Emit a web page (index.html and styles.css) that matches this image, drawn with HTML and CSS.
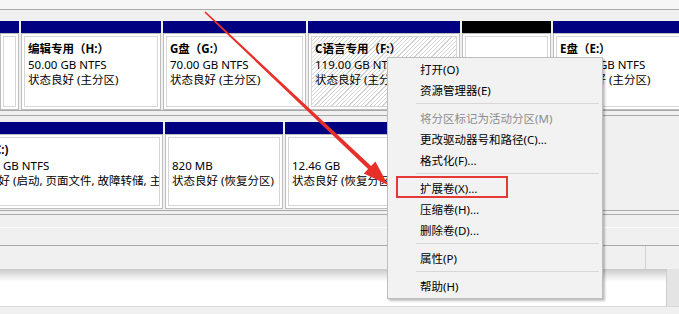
FILE: index.html
```html
<!DOCTYPE html>
<html lang="zh-CN">
<head>
    <meta charset="UTF-8">
    <meta name="viewport" content="width=device-width, initial-scale=1.0">
    <title>磁盘管理</title>
    <link rel="stylesheet" href="styles.css">
</head>
<body>
    <div class="console">
        <div class="strip"></div>

        <!-- 磁盘 0 -->
        <div class="disk disk-a">
            <div class="part p-edge">
                <div class="part-head"></div>
                <div class="part-body"><div class="part-inner"></div></div>
            </div>
            <div class="part p-h">
                <div class="part-head"></div>
                <div class="part-body">
                    <div class="part-inner">
                        <div class="name">编辑专用（H:）</div>
                        <div>50.00 GB NTFS</div>
                        <div>状态良好 (主分区)</div>
                    </div>
                </div>
            </div>
            <div class="part p-g">
                <div class="part-head"></div>
                <div class="part-body">
                    <div class="part-inner">
                        <div class="name">G盘（G:）</div>
                        <div>70.00 GB NTFS</div>
                        <div>状态良好 (主分区)</div>
                    </div>
                </div>
            </div>
            <div class="part p-f">
                <div class="part-head"></div>
                <div class="part-body">
                    <div class="part-inner hatch">
                        <div class="name">C语言专用（F:）</div>
                        <div>119.00 GB NTFS</div>
                        <div>状态良好 (主分区)</div>
                    </div>
                </div>
            </div>
            <div class="part p-free">
                <div class="part-head black"></div>
                <div class="part-body"><div class="part-inner"></div></div>
            </div>
            <div class="part p-e">
                <div class="part-head"></div>
                <div class="part-body">
                    <div class="part-inner">
                        <div class="name">E盘（E:）</div>
                        <div>100.00 GB NTFS</div>
                        <div>状态良好 (主分区)</div>
                    </div>
                </div>
            </div>
        </div>

        <!-- 磁盘 1 -->
        <div class="disk disk-b">
            <div class="part p-c">
                <div class="part-head"></div>
                <div class="part-body">
                    <div class="part-inner">
                        <div class="name">系统 (C:)</div>
                        <div>100.00 GB NTFS</div>
                        <div>状态良好 (启动, 页面文件, 故障转储, 主分区)</div>
                    </div>
                </div>
            </div>
            <div class="part p-rec1">
                <div class="part-head"></div>
                <div class="part-body">
                    <div class="part-inner">
                        <div class="name">&nbsp;</div>
                        <div>820 MB</div>
                        <div>状态良好 (恢复分区)</div>
                    </div>
                </div>
            </div>
            <div class="part p-rec2">
                <div class="part-head"></div>
                <div class="part-body">
                    <div class="part-inner">
                        <div class="name">&nbsp;</div>
                        <div>12.46 GB</div>
                        <div>状态良好 (恢复分区)</div>
                    </div>
                </div>
            </div>
        </div>

        <div class="lower">
            <div class="band band-1"></div>
            <div class="band band-2"></div>
            <div class="band band-3"><div class="band-split"></div></div>
            <div class="band band-4"><div class="scroll-block"></div></div>
            <div class="band band-5"></div>
        </div>
    </div>

    <div class="menu">
        <div class="item">打开(O)</div>
        <div class="item">资源管理器(E)</div>
        <div class="sep"></div>
        <div class="item disabled">将分区标记为活动分区(M)</div>
        <div class="item">更改驱动器号和路径(C)...</div>
        <div class="item">格式化(F)...</div>
        <div class="sep"></div>
        <div class="item">扩展卷(X)...</div>
        <div class="item">压缩卷(H)...</div>
        <div class="item">删除卷(D)...</div>
        <div class="sep"></div>
        <div class="item">属性(P)</div>
        <div class="sep"></div>
        <div class="item">帮助(H)</div>
        <div class="mark"></div>
    </div>

    <svg class="arrow" width="679" height="314" viewBox="0 0 679 314">
        <polygon fill="#e8302a" points="204.4,12.5 205.6,11.5 371.1,165.9 375.4,161.4 388,185 363.8,173.6 368.1,169.1"/>
    </svg>
</body>
</html>
```

FILE: styles.css
```css
body {
    margin: 0;
    width: 679px;
    height: 314px;
    overflow: hidden;
    background: #f0f0f0;
    font-family: "Noto Sans", "Noto Sans CJK SC", sans-serif;
    font-size: 11.5px;
    color: #000;
    position: relative;
}
.console {
    height: 314px;
    overflow: hidden;
}
.strip {
    height: 9px;
    background: #f6f6f6;
    border-bottom: 1px solid #ababab;
}
.disk {
    display: flex;
    gap: 2px;
    overflow: hidden;
    border-bottom: 1px solid #a9a9a9;
}
.disk-a {
    padding-top: 11px;
    height: 89px;
}
.disk-b {
    margin-top: 4px;
    border-top: 1px solid #a9a9a9;
    padding-top: 6px;
    padding-bottom: 1px;
    height: 87px;
}
.part {
    flex: none;
    display: flex;
    flex-direction: column;
}
.part-head {
    height: 12px;
    background: #000080;
}
.part-head.black {
    background: #000;
}
.part-body {
    flex: 1;
    min-height: 0;
    display: flex;
    background: #fff;
    border: 1px solid #bdbdbd;
    padding: 2px;
    overflow: hidden;
}
.part-inner {
    flex: 1;
    border: 1px solid #d6d6d6;
    padding: 4px 3px 0;
    line-height: 15.5px;
    white-space: nowrap;
    overflow: hidden;
}
.part-inner.hatch {
    background: repeating-linear-gradient(135deg, #fff 0 2.2px, #d4d4d4 2.2px 3px);
}
.name {
    font-weight: 700;
}
.p-edge { width: 19px; }
.p-h { width: 140px; }
.p-g { width: 143px; }
.p-f { width: 152px; }
.p-free { width: 89px; }
.p-e { width: 150px; }
.p-c { width: 206px; margin-left: -43px; }
.p-rec1 { width: 118px; }
.p-rec2 { width: 180px; }

.lower {
    margin-top: 3px;
    border-top: 1px solid #ababab;
}
.band-1 {
    height: 12px;
    border-bottom: 1px solid #fbfbfb;
}
.band-2 {
    height: 17px;
    border-bottom: 1px solid #a8a8a8;
}
.band-3 {
    height: 23px;
    display: flex;
    justify-content: flex-end;
}
.band-split {
    width: 33px;
    border-left: 1px solid #d2d2d2;
}
.band-4 {
    height: 37px;
    background: linear-gradient(#c9c9c9, #f2f2f2 9px, #fff 13px);
    display: flex;
    justify-content: flex-end;
}
.scroll-block {
    width: 12px;
    background: #e4e4e4;
    border-left: 1px solid #cfcfcf;
}
.band-5 {
    height: 8px;
    border-top: 1px solid #d8d8d8;
}

.menu {
    position: absolute;
    left: 387px;
    top: 57px;
    width: 216px;
    box-sizing: border-box;
    height: 242px;
    background: #f2f2f2;
    border: 1px solid #bdbdbd;
    box-shadow: 2px 2px 2px rgba(0, 0, 0, 0.25);
    padding: 1px 0 0;
}
.item {
    height: 21px;
    line-height: 21px;
    padding-left: 32px;
    white-space: nowrap;
}
.item.disabled {
    color: #8d8d8d;
}
.sep {
    height: 1px;
    margin: 2px 3px 4px 28px;
    background: #d7d7d7;
}
.mark {
    position: absolute;
    left: 8px;
    top: 118px;
    width: 108px;
    height: 18px;
    border: 2px solid #e53935;
}
.arrow {
    position: absolute;
    left: 0;
    top: 0;
    pointer-events: none;
}
```
